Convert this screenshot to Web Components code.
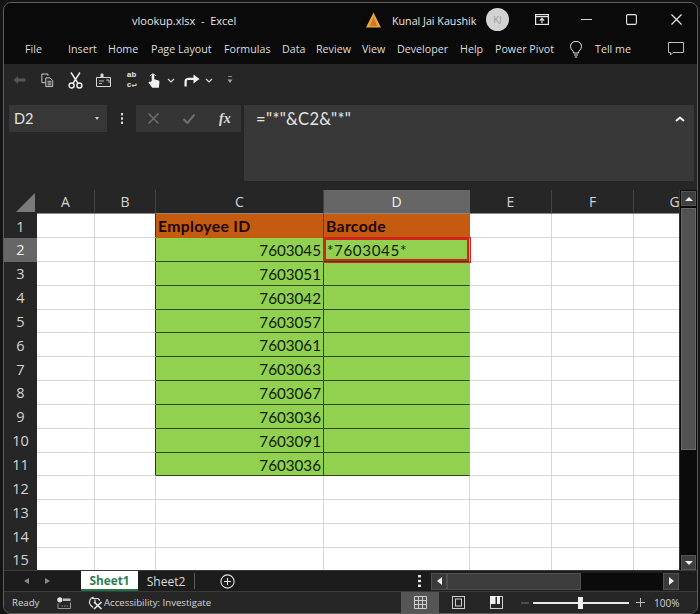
<!DOCTYPE html>
<html>
<head>
<meta charset="utf-8">
<title>vlookup.xlsx - Excel</title>
<style>
  html, body { margin: 0; height: 100%; background: #141414; overflow: hidden; }
  body { padding: 2px 2px 0 3px; box-sizing: border-box; font-family: "Open Sans", "Noto Sans", sans-serif; }
</style>
</head>
<body>
<excel-window>
  <title-bar></title-bar>
  <ribbon-tabs></ribbon-tabs>
  <quick-access></quick-access>
  <formula-bar cell="D2" formula='="*"&amp;C2&amp;"*"'></formula-bar>
  <sheet-grid></sheet-grid>
  <sheet-tabs></sheet-tabs>
  <status-bar></status-bar>
</excel-window>

<script>
// small helper so each element stays a few lines
function shadow(el, html) {
  el.attachShadow({ mode: 'open' }).innerHTML = html;
}

class ExcelWindow extends HTMLElement {
  constructor() {
    super();
    shadow(this, `
      <style>
        :host {
          display: flex;
          flex-direction: column;
          height: 610px;
          border: 1px solid #5e5e5e;
          border-radius: 8px;
          overflow: hidden;
          background: #262626;
        }
      </style>
      <slot></slot>`);
  }
}

class TitleBar extends HTMLElement {
  constructor() {
    super();
    shadow(this, `
      <style>
        :host {
          display: flex;
          align-items: center;
          height: 33px;
          background: #0a0a0a;
          color: #e6e6e6;
          font-size: 11px;
          box-sizing: border-box;
          padding-left: 128px;
        }
        .doc { width: 234px; white-space: pre; position: relative; top: 1px; }
        .warn { width: 15px; height: 16px; margin-right: 11px; display: block; }
        .user { width: 94px; white-space: nowrap; position: relative; top: 1px; font-size: 10.7px; }
        .avatar {
          width: 23px; height: 23px; border-radius: 50%;
          background: #d2d2d2; color: #9a9a9a;
          font-size: 9.5px; line-height: 23px; text-align: center;
          margin-right: 26px;
        }
        .ctl { display: block; flex: none; }
      </style>
      <span class="doc">vlookup.xlsx  -  Excel</span>
      <svg class="warn" viewBox="0 0 15 16">
        <path d="M7.5 0.5 L15 15.5 H0 Z" fill="#e8a33a"/>
        <path d="M7.5 5 L11 14 H4 Z" fill="#c9772a"/>
      </svg>
      <span class="user">Kunal Jai Kaushik</span>
      <span class="avatar">KJ</span>
      <svg class="ctl" width="14" height="11" viewBox="0 0 14 11" fill="none" stroke="#e6e6e6" stroke-width="1.2" style="margin-right:32px">
        <rect x="0.6" y="0.6" width="12.8" height="9.8"/>
        <path d="M0.6 2.6H13.4M7 9V4.6M4.8 6.6L7 4.4L9.2 6.6"/>
      </svg>
      <svg class="ctl" width="11" height="3" viewBox="0 0 11 3" style="margin-right:34px">
        <path d="M0 1.5H11" stroke="#d8d8d8" stroke-width="1.1"/>
      </svg>
      <svg class="ctl" width="11" height="11" viewBox="0 0 11 11" style="margin-right:34px">
        <rect x="0.6" y="0.6" width="9.8" height="9.8" rx="1.4" fill="none" stroke="#e6e6e6" stroke-width="1.1"/>
      </svg>
      <svg class="ctl" width="11" height="11" viewBox="0 0 11 11">
        <path d="M0.5 0.5L10.5 10.5M10.5 0.5L0.5 10.5" stroke="#e6e6e6" stroke-width="1.2"/>
      </svg>`);
  }
}

const RIBBON_TABS = [
  ['File', 43], ['Insert', 40], ['Home', 43], ['Page Layout', 73], ['Formulas', 58], ['Data', 34],
  ['Review', 46], ['View', 35], ['Developer', 63], ['Help', 35], ['Power Pivot', 74]
];

class RibbonTabs extends HTMLElement {
  constructor() {
    super();
    const tabs = RIBBON_TABS.map(([t, w]) => `<span style="width:${w}px">${t}</span>`).join('');
    shadow(this, `
      <style>
        :host {
          display: flex;
          align-items: center;
          height: 28px;
          box-sizing: border-box;
          padding: 0 0 2px 21px;
          background: #0a0a0a;
          color: #dedede;
          font-size: 10.7px;
        }
        span { flex: none; white-space: nowrap; }
        svg { display: block; flex: none; }
      </style>
      ${tabs}
      <svg width="14" height="17" viewBox="0 0 14 17" fill="none" stroke="#e4e4e4" stroke-width="1" style="margin:0 12px 0 0">
        <path d="M4.6 12C4.6 9.6 1.5 8.6 1.5 5.4A5.4 5 0 0 1 12.5 5.4C12.5 8.6 9.4 9.6 9.4 12Z"/>
        <path d="M5 14H9M5.8 16H8.2"/>
      </svg>
      <span style="width:64px">Tell me</span>
      <svg width="16" height="14" viewBox="0 0 16 14" fill="none" stroke="#bdbdbd" stroke-width="1" style="margin-left:9px">
        <path d="M0.5 0.5H15.5V10.5H5L2.5 13V10.5H0.5Z"/>
      </svg>`);
  }
}

class QuickAccess extends HTMLElement {
  constructor() {
    super();
    shadow(this, `
      <style>
        :host {
          display: flex;
          align-items: center;
          height: 41px;
          padding: 0 0 9px 9px;
          box-sizing: border-box;
          background: #262626;
          color: #e8e8e8;
        }
        svg { display: block; flex: none; }
        .abc { flex: none; width: 13px; font: 700 8px/10px "Liberation Mono", monospace; text-align: center; }
      </style>
      <svg width="13" height="10" viewBox="0 0 13 10" style="margin-right:15px">
        <path d="M0.5 5L5 1V3.6H12.5V6.4H5V9Z" fill="#575757"/>
      </svg>
      <svg width="13" height="15" viewBox="0 0 15 17" fill="none" stroke="#e0e0e0" stroke-width="1" style="margin-right:14px">
        <path d="M8 3V1H1V11H5"/>
        <path d="M5.5 5.5H10.5L13.5 8.5V15.5H5.5Z" fill="#262626"/>
        <path d="M7.5 9.5H12M7.5 11.5H12M7.5 13.5H12"/>
      </svg>
      <svg width="15" height="17" viewBox="0 0 15 17" fill="none" stroke="#f0f0f0" stroke-width="1.4" style="margin-right:13px">
        <path d="M3 0.5L9.8 11M12 0.5L5.2 11"/>
        <circle cx="3.6" cy="13.5" r="2.5"/><circle cx="11.4" cy="13.5" r="2.5"/>
      </svg>
      <svg width="15" height="15" viewBox="0 0 15 15" fill="none" stroke="#d8d8d8" stroke-width="1" style="margin-right:14px">
        <path d="M0.5 4.5H14.5V13.5H0.5Z"/>
        <path d="M5 4V1H7V4" fill="#d8d8d8"/>
        <path d="M3 8H8M3 10.5H6M10 7H13V10" stroke="#bdbdbd"/>
      </svg>
      <span class="abc" style="margin-right:10px">ab<br>c&#8629;</span>
      <svg width="12" height="17" viewBox="0 0 13 17" style="margin-right:7px">
        <path d="M4 9V2.2a1.4 1.4 0 0 1 2.8 0V7.2L10.6 8.2C12 8.6 12.6 9.4 12.4 10.8L11.8 16.4H4.6L1 11.6C0.2 10.4 1.6 9 2.8 10Z" fill="#f0f0f0"/>
        <path d="M2 3.6A4 4 0 0 1 8.8 3.6" fill="none" stroke="#d0d0d0" stroke-width="1"/>
      </svg>
      <svg width="8" height="5" viewBox="0 0 8 5" fill="none" stroke="#d8d8d8" stroke-width="1.2" style="margin-right:9px">
        <path d="M1 1L4 4L7 1"/>
      </svg>
      <svg width="16" height="13" viewBox="0 0 16 13" style="margin-right:5px">
        <path d="M1.6 12.5V7.4A2.6 2.6 0 0 1 4.2 4.8H10" fill="none" stroke="#f4f4f4" stroke-width="2.2"/>
        <path d="M9.5 0.5L15.5 5L9.5 9.5Z" fill="#f4f4f4"/>
      </svg>
      <svg width="8" height="5" viewBox="0 0 8 5" fill="none" stroke="#d8d8d8" stroke-width="1.2" style="margin-right:14px">
        <path d="M1 1L4 4L7 1"/>
      </svg>
      <svg width="6" height="8" viewBox="0 0 6 8">
        <path d="M1 0.5H5" stroke="#8a8a8a" stroke-width="1"/>
        <path d="M0.5 3.5H5.5L3 7Z" fill="#a5a5a5"/>
      </svg>`);
  }
}

class FormulaBar extends HTMLElement {
  constructor() {
    super();
    shadow(this, `
      <style>
        :host {
          display: flex;
          align-items: flex-start;
          height: 85px;
          box-sizing: border-box;
          padding: 0 3px 9px 5px;
          background: #262626;
          color: #e4e4e4;
        }
        .name {
          flex: none;
          display: flex;
          align-items: center;
          justify-content: space-between;
          box-sizing: border-box;
          width: 98px;
          height: 27px;
          padding: 0 8px 0 5px;
          background: #373737;
          font: 14.5px Lato, sans-serif;
        }
        .caret { width: 0; height: 0; border: 2.5px solid transparent; border-top: 3px solid #cfcfcf; border-bottom: 0; }
        .dots {
          flex: none;
          width: 29px;
          height: 27px;
          display: flex;
          align-items: center;
          justify-content: center;
        }
        .dots svg, .btns svg, .chev { display: block; }
        .btns {
          flex: none;
          display: flex;
          align-items: center;
          box-sizing: border-box;
          width: 105px;
          height: 27px;
          padding-left: 12px;
          background: #353535;
        }
        .fx { font: italic 700 14px "Liberation Serif", serif; color: #dcdcdc; margin-left: 24px; }
        .input {
          flex: 1;
          height: 76px;
          margin-left: 3px;
          box-sizing: border-box;
          padding: 6px 9px 0 12px;
          background: #383838;
          display: flex;
          justify-content: space-between;
          font: 16.5px/16px Lato, sans-serif;
          letter-spacing: 0.35px;
        }
        .chev { margin-top: 5px; }
      </style>
      <div class="name"><span>${this.getAttribute('cell')}</span><span class="caret"></span></div>
      <div class="dots"><svg width="2" height="11" viewBox="0 0 2 11" fill="#dcdcdc">
        <rect width="2" height="2.4"/><rect y="4.3" width="2" height="2.4"/><rect y="8.6" width="2" height="2.4"/>
      </svg></div>
      <div class="btns">
        <svg width="11" height="11" viewBox="0 0 11 11" stroke="#6e6e6e" stroke-width="1.5" style="margin-right:24px">
          <path d="M0.5 0.5L10.5 10.5M10.5 0.5L0.5 10.5"/>
        </svg>
        <svg width="12" height="10" viewBox="0 0 12 10" fill="none" stroke="#6e6e6e" stroke-width="2">
          <path d="M0.5 5L4.5 9L11.5 0.5"/>
        </svg>
        <span class="fx">fx</span>
      </div>
      <div class="input">
        <span>${this.getAttribute('formula').replace(/&/g, '&amp;')}</span>
        <svg class="chev" width="10" height="6" viewBox="0 0 10 6" fill="none" stroke="#f0f0f0" stroke-width="2"><path d="M1 5L5 1.5L9 5"/></svg>
      </div>`);
  }
}

const IDS = ['7603045','7603051','7603042','7603057','7603061','7603063','7603067','7603036','7603091','7603036'];

class SheetGrid extends HTMLElement {
  constructor() {
    super();
    let cells = '<div class="hd corner"><svg width="19" height="19" viewBox="0 0 19 19"><path d="M19 0V19H0Z" fill="#7a7a7a"/></svg></div>';
    ['A','B','C','D','E','F','G'].forEach(c => {
      cells += `<div class="hd col${c === 'D' ? ' on' : ''}">${c}</div>`;
    });
    for (let r = 1; r <= 15; r++) {
      cells += `<div class="hd row${r === 2 ? ' on' : ''}">${r}</div>`;
      ['A','B','C','D','E','F','G'].forEach(c => {
        let cls = 'c', txt = '';
        if ((c === 'C' || c === 'D') && r <= 11) {
          cls += r === 1 ? ' orange' : ' green';
          if (r === 1) txt = c === 'C' ? 'Employee ID' : 'Barcode';
          if (c === 'C' && r > 1) { txt = IDS[r - 2]; cls += ' num'; }
          if (c === 'C') cls += ' split';
          if (c === 'D' && r === 2) { txt = '*7603045*'; cls += ' picked'; }
        }
        if (c === 'B' && r <= 11) cls += ' edge';
        cells += `<div class="${cls}">${txt}</div>`;
      });
    }
    shadow(this, `
      <style>
        :host {
          display: flex;
          height: 380px;
          background: #262626;
          flex: none;
        }
        .main { width: 675px; height: 380px; overflow: hidden; flex: none; }
        .grid {
          display: grid;
          grid-template-columns: 33px 58px 61px 168px 146px 82px 82px 82px;
          grid-template-rows: 24px 24px repeat(14, 23.85px);
          width: 712px;
        }
        .hd {
          display: flex;
          align-items: center;
          justify-content: center;
          box-sizing: border-box;
          color: #d4d4d4;
          font-size: 14px;
          background: #262626;
        }
        .corner { justify-content: flex-end; align-items: flex-end; padding: 0 2px 2px 0; }
        .corner svg { display: block; }
        .col { border-right: 1px solid #444; border-bottom: 1px solid #8a8a8a; }
        .row { font-size: 14.5px; }
        .on { background: #666; color: #f2f2f2; border-right-color: #666; }
        .c {
          box-sizing: border-box;
          background: #fff;
          border-right: 1px solid #d6d6d6;
          border-bottom: 1px solid #d6d6d6;
          font: 15.2px/24px Lato, sans-serif;
          color: #0e1a06;
          padding: 0 2px;
          white-space: nowrap;
          overflow: hidden;
        }
        .edge { border-right-color: #2b3a1c; }
        .orange {
          background: #c55a11;
          border-bottom-color: #c55a11;
          border-right-color: #c55a11;
          color: #1c0600;
          font-weight: 700;
          font-size: 15.8px;
          letter-spacing: 0.3px;
        }
        .green { background: #92d050; border-bottom-color: #31451b; border-right-color: #92d050; }
        .num { text-align: right; }
        .split { border-right-color: #31451b; }
        .orange.split { border-right-color: #7a3a10; }
        .picked {
          box-shadow: 0 0 0 1px #d3231d, inset 0 0 0 2px #d3231d;
          padding-left: 3px;
          letter-spacing: 0.6px;
          overflow: visible;
          position: relative;
        }
        .bar { flex: none; width: 18px; height: 380px; background: #0b0b0b; display: flex; flex-direction: column; align-items: center; box-sizing: border-box; border-left: 1px solid #333; }
        .btn { box-sizing: border-box; width: 15px; height: 15px; background: #3f3f3f; border: 1px solid #555; display: flex; align-items: center; justify-content: center; flex: none; }
        .up { margin-top: 1px; }
        .thumb { box-sizing: border-box; width: 15px; height: 242px; margin-top: 2px; background: #525252; border: 1px solid #6a6a6a; flex: none; }
        .gap { flex: 1; }
        .btn i { display: block; width: 0; height: 0; border-left: 4px solid transparent; border-right: 4px solid transparent; }
        .up i { border-bottom: 4px solid #f0f0f0; }
        .dn i { border-top: 4px solid #f0f0f0; }
      </style>
      <div class="main"><div class="grid">${cells}</div></div>
      <div class="bar">
        <div class="btn up"><i></i></div>
        <div class="thumb"></div>
        <div class="gap"></div>
        <div class="btn dn"><i></i></div>
      </div>`);
  }
}

class SheetTabs extends HTMLElement {
  constructor() {
    super();
    shadow(this, `
      <style>
        :host {
          display: flex;
          align-items: center;
          height: 21px;
          flex: none;
          background: #1c1c1c;
          border-top: 1px solid #3a3a3a;
          box-sizing: border-box;
          color: #dcdcdc;
        }
        .nav { width: 77px; display: flex; align-items: center; padding-left: 20px; box-sizing: border-box; flex: none; }
        .nav i { display: block; width: 0; height: 0; border: 3.5px solid transparent; }
        .nav .l { border-right: 5px solid #8a8a8a; border-left: 0; margin-right: 16px; }
        .nav .r { border-left: 5px solid #8a8a8a; border-right: 0; }
        .on {
          flex: none;
          width: 57px;
          height: 20px;
          box-sizing: border-box;
          background: #fff;
          border-bottom: 2px solid #217346;
          color: #2f7d57;
          font: 700 11.8px/19px "Open Sans", sans-serif;
          text-align: center;
        }
        .off { flex: none; width: 56px; font-size: 12px; text-align: center; }
        .sep { flex: none; width: 1px; height: 16px; background: #5a5a5a; margin-right: 25px; }
        svg { display: block; flex: none; }
        .dots { margin-left: 183px; margin-right: 10px; }
        .hbar { flex: none; display: flex; align-items: stretch; height: 17px; background: #0b0b0b; width: 248px; }
        .b { flex: none; box-sizing: border-box; width: 16px; background: #3a3a3a; border: 1px solid #505050; display: flex; align-items: center; justify-content: center; }
        .b i { display: block; width: 0; height: 0; border: 4px solid transparent; }
        .b .l { border-right: 5px solid #f0f0f0; border-left: 0; }
        .b .r { border-left: 5px solid #f0f0f0; border-right: 0; }
        .t { flex: none; box-sizing: border-box; width: 134px; background: #3d3d3d; border: 1px solid #505050; }
        .s { flex: 1; }
      </style>
      <div class="nav"><i class="l"></i><i class="r"></i></div>
      <div class="on">Sheet1</div>
      <div class="off">Sheet2</div>
      <div class="sep"></div>
      <svg width="15" height="15" viewBox="0 0 15 15" fill="none" stroke="#e4e4e4" stroke-width="1.1">
        <circle cx="7.5" cy="7.5" r="6.6"/><path d="M7.5 4V11M4 7.5H11"/>
      </svg>
      <svg class="dots" width="3" height="12" viewBox="0 0 3 12" fill="#e4e4e4">
        <rect width="3" height="2.4"/><rect y="4.8" width="3" height="2.4"/><rect y="9.6" width="3" height="2.4"/>
      </svg>
      <div class="hbar">
        <div class="b"><i class="l"></i></div>
        <div class="t"></div>
        <div class="s"></div>
        <div class="b"><i class="r"></i></div>
      </div>`);
  }
}

class StatusBar extends HTMLElement {
  constructor() {
    super();
    shadow(this, `
      <style>
        :host {
          display: flex;
          align-items: center;
          flex: 1;
          background: #262626;
          border-top: 1px solid #3a3a3a;
          box-sizing: border-box;
          color: #d6d6d6;
          font-size: 9.6px;
          padding-left: 8px;
        }
        span { flex: none; white-space: nowrap; }
        svg { display: block; flex: none; }
        .view { flex: none; align-self: stretch; display: flex; align-items: center; justify-content: center; width: 38px; }
        .view.on { background: #555; margin-left: 190px; }
        .slider { flex: none; display: flex; align-items: center; position: relative; width: 96px; height: 2px; background: #e8e8e8; margin: 0 7px 0 4px; }
        .slider i { position: absolute; left: 45px; top: -5px; width: 5px; height: 12px; background: #f2f2f2; }
      </style>
      <span style="width:45px">Ready</span>
      <svg width="14" height="12" viewBox="0 0 14 12" style="margin-right:17px">
        <circle cx="2.8" cy="2.8" r="2.6" fill="#e4e4e4"/>
        <path d="M6 1.5H13.5V4H6Z" fill="#bdbdbd"/>
        <path d="M1 6.5V11.5H13.5V5.5" fill="none" stroke="#9a9a9a" stroke-width="1"/>
        <path d="M4.5 9H11" stroke="#8a8a8a" stroke-dasharray="1.5 1"/>
      </svg>
      <svg width="15" height="15" viewBox="0 0 15 15" fill="none" stroke="#e0e0e0" stroke-width="1.2" style="margin-right:1px">
        <path d="M6 2A5 5 0 0 0 2.5 10L5 12.5"/>
        <path d="M4 3.5H10L12 5.5M7 4.5V8"/>
        <path d="M6 7L13.5 14M13.5 7L6 14" stroke="#f0f0f0" stroke-width="1.6"/>
      </svg>
      <span style="width:107px;font-size:9.6px">Accessibility: Investigate</span>
      <div class="view on"><svg width="13" height="13" viewBox="0 0 13 13" fill="none" stroke="#cfcfcf" stroke-width="1">
        <path d="M0.5 0.5H12.5V12.5H0.5ZM4.5 0.5V12.5M8.5 0.5V12.5M0.5 4.5H12.5M0.5 8.5H12.5"/>
      </svg></div>
      <div class="view"><svg width="13" height="13" viewBox="0 0 13 13" fill="none" stroke="#cfcfcf" stroke-width="1">
        <rect x="0.5" y="0.5" width="12" height="12"/><rect x="3.5" y="3" width="6" height="7"/>
      </svg></div>
      <div class="view" style="margin-right:6px"><svg width="13" height="13" viewBox="0 0 13 13">
        <rect x="0.5" y="0.5" width="12" height="12" fill="none" stroke="#cfcfcf"/>
        <rect y="0" width="5.5" height="8" fill="#eee"/><rect x="7" y="0" width="3" height="8" fill="#eee"/>
      </svg></div>
      <svg width="8" height="2" viewBox="0 0 8 2"><path d="M0 1H8" stroke="#777"/></svg>
      <div class="slider"><i></i></div>
      <svg width="9" height="9" viewBox="0 0 9 9" stroke="#bdbdbd"><path d="M0 4.5H9M4.5 0V9"/></svg>
      <span style="margin-left:9px;font-size:10px">100%</span>`);
  }
}

customElements.define('excel-window', ExcelWindow);
customElements.define('title-bar', TitleBar);
customElements.define('ribbon-tabs', RibbonTabs);
customElements.define('quick-access', QuickAccess);
customElements.define('formula-bar', FormulaBar);
customElements.define('sheet-grid', SheetGrid);
customElements.define('sheet-tabs', SheetTabs);
customElements.define('status-bar', StatusBar);
</script>
</body>
</html>
